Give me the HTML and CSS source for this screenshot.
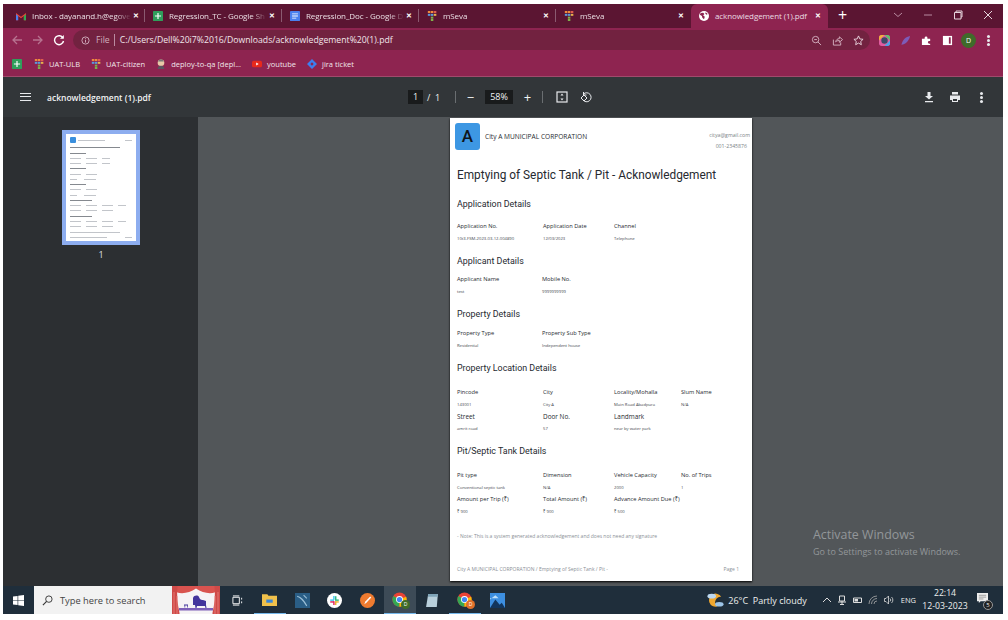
FILE: index.html
```html
<!DOCTYPE html>
<html lang="en">
<head>
    <meta charset="UTF-8">
    <title>acknowledgement (1).pdf</title>
    <link rel="stylesheet" href="styles.css">
</head>
<body>
    <svg class="defs" width="0" height="0">
        <symbol id="sheet" viewBox="0 0 12 12"><rect width="12" height="12" rx="1" fill="#2f9e5b"/><path d="M5.3 2.5h1.4v2.8h3v1.4h-3v2.8H5.3V6.7h-3V5.3h3z" fill="#fff"/></symbol>
        <symbol id="doc" viewBox="0 0 12 12"><rect width="12" height="12" rx="1" fill="#4a80ee"/><path d="M2.5 3h7v1h-7zM2.5 5.5h7v1h-7zM2.5 8h5v1h-5z" fill="#fff"/></symbol>
        <symbol id="seva" viewBox="0 0 12 12"><rect x="1" y="0" width="3" height="2.4" fill="#f08a3c"/><rect x="4.6" y="0" width="3" height="2.4" fill="#f08a3c"/><rect x="8.2" y="0" width="3" height="2.4" fill="#e05a4e"/><rect x="1" y="3.4" width="3" height="2.4" fill="#5c9ad8"/><rect x="4.6" y="3.4" width="3" height="2.4" fill="#5c9ad8"/><rect x="8.2" y="3.4" width="3" height="2.4" fill="#e8b24a"/><rect x="4.6" y="6.8" width="3" height="2.4" fill="#7fb24a"/><rect x="4.6" y="9.6" width="3" height="2.4" fill="#7fb24a"/></symbol>
        <symbol id="chrome" viewBox="0 0 20 20"><circle cx="10" cy="10" r="9.5" fill="#ea4335"/><path d="M10 10 1.8 5.3A9.5 9.5 0 0 0 10 19.5z" fill="#34a853"/><path d="M10 10v9.5A9.5 9.5 0 0 0 18.8 6.4z" fill="#fbbc05"/><circle cx="10" cy="10" r="4.6" fill="#fff"/><circle cx="10" cy="10" r="3.5" fill="#4285f4"/></symbol>
    </svg>

    <div class="window">
        <div class="tabstrip">
            <div class="tab">
                <svg class="tab-icon" viewBox="0 0 12 10"><path d="M0 1.5 6 6l6-4.500V10H9.400V5L6 7.600 2.600 5v5H0z" fill="#ea4335"/><path d="M0 3v7h2.600V5z" fill="#4a80ee"/><path d="M12 3v7H9.400V5z" fill="#34a853"/></svg>
                <span class="tab-title">Inbox - dayanand.h@egove</span><span class="tab-close">✕</span>
            </div>
            <div class="tab">
                <svg class="tab-icon"><use href="#sheet"/></svg>
                <span class="tab-title">Regression_TC - Google Sh</span><span class="tab-close">✕</span>
            </div>
            <div class="tab">
                <svg class="tab-icon"><use href="#doc"/></svg>
                <span class="tab-title">Regression_Doc - Google D</span><span class="tab-close">✕</span>
            </div>
            <div class="tab">
                <svg class="tab-icon"><use href="#seva"/></svg>
                <span class="tab-title">mSeva</span><span class="tab-close">✕</span>
            </div>
            <div class="tab tab-last">
                <svg class="tab-icon"><use href="#seva"/></svg>
                <span class="tab-title">mSeva</span><span class="tab-close">✕</span>
            </div>
            <div class="tab tab-active">
                <svg class="tab-icon" viewBox="0 0 12 12"><circle cx="6" cy="6" r="6" fill="#fff"/><path d="M2 2.500 5 2l1.500 1.500L5 5.500l2 1.500-1 3-2-2-.5-2L1 4.500zM8 1.500l2.500 2-1.500 1L7.500 3z" fill="#8e2450"/></svg>
                <span class="tab-title">acknowledgement (1).pdf</span><span class="tab-close">✕</span>
            </div>
            <div class="new-tab">+</div>
            <div class="win-controls">
                <svg viewBox="0 0 10 10"><path d="M1 3l4 3.500L9 3" fill="none" stroke="#b98ba0"/></svg>
                <svg viewBox="0 0 10 10"><path d="M1 5h8" stroke="#b98ba0"/></svg>
                <svg viewBox="0 0 10 10"><path d="M1.500 2.500h6.500v6.500H1.500zM3 2.500V1h6v6H8" fill="none" stroke="#e6d5dc"/></svg>
                <svg viewBox="0 0 10 10"><path d="M1 1l8 8M9 1l-8 8" stroke="#e6d5dc"/></svg>
            </div>
        </div>

        <div class="toolbar">
            <svg class="nav-icon" viewBox="0 0 12 12"><path d="M11 6H2M6 2 2 6l4 4" fill="none" stroke="#b7728f" stroke-width="1.300"/></svg>
            <svg class="nav-icon" viewBox="0 0 12 12"><path d="M1 6h9M6 2l4 4-4 4" fill="none" stroke="#b7728f" stroke-width="1.300"/></svg>
            <svg class="nav-icon" viewBox="0 0 12 12"><path d="M10 4A4.500 4.500 0 1 0 10.500 7" fill="none" stroke="#fff" stroke-width="1.400"/><path d="M10.800 1v3.800H7z" fill="#fff"/></svg>
            <div class="omnibox">
                <svg class="info-icon" viewBox="0 0 10 10"><circle cx="5" cy="5" r="4" fill="none" stroke="#d5b4c2"/><path d="M5 4.300v3M5 2.500v1" stroke="#d5b4c2"/></svg>
                <span class="scheme">File</span>
                <span class="url">C:/Users/Dell%20i7%2016/Downloads/acknowledgement%20(1).pdf</span>
                <div class="omni-actions">
                    <svg viewBox="0 0 12 12"><circle cx="5" cy="5" r="3.500" fill="none" stroke="#d5b4c2"/><path d="M7.500 7.500 11 11M3.500 5h3" stroke="#d5b4c2"/></svg>
                    <svg viewBox="0 0 12 12"><path d="M1.500 5v6h8V8M4 7.500C4.500 5 6 4 8 4V2l3.500 3L8 8V6C6 6 5 6.500 4 7.500z" fill="none" stroke="#d5b4c2"/></svg>
                    <svg viewBox="0 0 12 12"><path d="M6 1l1.500 3.300 3.500.4-2.600 2.400.7 3.500L6 8.800l-3.100 1.800.7-3.500L1 4.700l3.500-.4z" fill="none" stroke="#ecdbe2"/></svg>
                </div>
            </div>
            <div class="ext-icons">
                <svg viewBox="0 0 12 12"><rect width="12" height="12" rx="3" fill="#e05ba0"/><path d="M0 6V3a3 3 0 0 1 3-3h3z" fill="#f2b13c"/><path d="M12 6V3a3 3 0 0 0-3-3H6z" fill="#5fc16e"/><path d="M12 6v3a3 3 0 0 1-3 3H6z" fill="#4aa5e8"/><circle cx="6" cy="6" r="3.500" fill="#3d4a66"/></svg>
                <svg viewBox="0 0 12 12"><path d="M11 1C6 2 3 5 1.500 10.500 6 10 9.500 7 11 1z" fill="#7d5cb8"/></svg>
                <svg viewBox="0 0 12 12"><path d="M1 4h3V3a1.500 1.500 0 0 1 3 0v1h3v2.500H9a1.500 1.500 0 0 0 0 3h1V11H1z" fill="#fff"/></svg>
                <svg viewBox="0 0 12 12"><path d="M1 1h10v10H1z" fill="#fff"/><path d="M7.500 2.500h2v7h-2z" fill="#8e2450"/></svg>
                <span class="avatar">D</span>
                <span class="dots dots-light"></span>
            </div>
        </div>

        <div class="bookmarks">
            <svg class="bm-icon bm-first"><use href="#sheet"/></svg>
            <span class="bm"><svg class="bm-icon"><use href="#seva"/></svg>UAT-ULB</span>
            <span class="bm"><svg class="bm-icon"><use href="#seva"/></svg>UAT-citizen</span>
            <span class="bm"><svg class="bm-icon" viewBox="0 0 12 12"><circle cx="6" cy="4.500" r="4" fill="#e8c9a8"/><path d="M2 12c0-3 2-4 4-4s4 1 4 4z" fill="#5a5560"/><path d="M2.500 3C3 1 5 .5 6 .5S9 1 9.500 3z" fill="#777"/></svg>deploy-to-qa [depl...</span>
            <span class="bm"><svg class="bm-icon" viewBox="0 0 12 12"><rect y="2" width="12" height="8" rx="2" fill="#e8291c"/><path d="M5 4.200 8 6 5 7.800z" fill="#fff"/></svg>youtube</span>
            <span class="bm"><svg class="bm-icon" viewBox="0 0 12 12"><path d="M6 0l6 6-6 6-6-6zM6 4 4 6l2 2 2-2z" fill="#3d7ff0"/></svg>jira ticket</span>
        </div>

        <div class="pdf-toolbar">
            <div class="pdf-left">
                <span class="burger"></span>
                <span class="pdf-name">acknowledgement (1).pdf</span>
            </div>
            <div class="pdf-center">
                <span class="num-box page-box">1</span>
                <span class="page-total">/&nbsp;&nbsp;1</span>
                <span class="pdf-sep"></span>
                <span class="zoom-btn">−</span>
                <span class="num-box zoom-box">58%</span>
                <span class="zoom-btn">+</span>
                <span class="pdf-sep"></span>
                <svg class="pdf-icon fit-icon" viewBox="0 0 12 12"><rect x="1" y="1" width="10" height="10" fill="none" stroke="#e8eaed" stroke-width="1.200"/><path d="M6 2.500 7.500 4.500h-3zM6 9.500l1.500-2h-3z" fill="#e8eaed"/></svg>
                <svg class="pdf-icon" viewBox="0 0 12 12"><path d="M3.500 3A4.500 4.500 0 1 1 3 9" fill="none" stroke="#e8eaed"/><path d="M3.500 1v3H6.500" fill="none" stroke="#e8eaed"/><path d="M4 4 1 7l3 3 3-3z" fill="none" stroke="#e8eaed"/></svg>
            </div>
            <div class="pdf-right">
                <svg class="pdf-icon" viewBox="0 0 12 12"><path d="M4.500 1h3v4H10L6 8.500 2 5h2.500zM2 10h8v1.200H2z" fill="#e8eaed"/></svg>
                <svg class="pdf-icon" viewBox="0 0 12 12"><path d="M3 1h6v2.500H3zM1 4.500h10V9H9v2H3V9H1zM4 8v2h4V8z" fill="#e8eaed"/></svg>
                <span class="dots dots-pdf"></span>
            </div>
        </div>

        <div class="viewer">
            <aside class="sidebar">
                <div class="thumb">
                    <div class="thumb-page">
                        <div class="thumb-head"><span class="thumb-logo"></span><span class="line w40"></span><span class="line w12 push"></span></div>
                        <span class="line dark w80"></span>
                        <span class="line dark w22"></span>
                        <div class="thumb-row"><span class="line w18"></span><span class="line w18"></span><span class="line w12"></span></div>
                        <div class="thumb-row"><span class="line w18"></span><span class="line w18"></span><span class="line w12"></span></div>
                        <span class="line dark w22"></span>
                        <div class="thumb-row"><span class="line w18"></span><span class="line w18"></span></div>
                        <div class="thumb-row"><span class="line w12"></span><span class="line w18 shift"></span></div>
                        <span class="line dark w22"></span>
                        <div class="thumb-row"><span class="line w18"></span><span class="line w18"></span></div>
                        <div class="thumb-row"><span class="line w12"></span><span class="line w18 shift"></span></div>
                        <span class="line dark w32"></span>
                        <div class="thumb-row"><span class="line w18"></span><span class="line w18"></span><span class="line w18"></span><span class="line w12"></span></div>
                        <div class="thumb-row"><span class="line w18"></span><span class="line w18"></span><span class="line w18"></span></div>
                        <span class="line dark w32"></span>
                        <div class="thumb-row"><span class="line w18"></span><span class="line w18"></span><span class="line w18"></span><span class="line w12"></span></div>
                        <div class="thumb-row"><span class="line w18"></span><span class="line w18"></span><span class="line w18"></span></div>
                        <span class="line w80"></span>
                        <div class="thumb-foot"><span class="line w60"></span><span class="line w12"></span></div>
                    </div>
                </div>
                <div class="thumb-num">1</div>
            </aside>

            <main class="doc-area">
                <article class="page">
                    <header class="page-head">
                        <div class="logo">A</div>
                        <div class="corp">City A MUNICIPAL CORPORATION</div>
                        <div class="contact">
                            <div>citya@gmail.com</div>
                            <div class="phone">001-2345876</div>
                        </div>
                    </header>

                    <h1>Emptying of Septic Tank / Pit - Acknowledgement</h1>

                    <h2 class="first-section">Application Details</h2>
                    <div class="fields fields-app">
                        <div class="field"><b>Application No.</b><span>10t3-FSM-2023-03-12-004890</span></div>
                        <div class="field"><b>Application Date</b><span>12/03/2023</span></div>
                        <div class="field"><b>Channel</b><span>Telephone</span></div>
                    </div>

                    <h2>Applicant Details</h2>
                    <div class="fields fields-short">
                        <div class="field"><b>Applicant Name</b><span>test</span></div>
                        <div class="field"><b>Mobile No.</b><span>9999999999</span></div>
                    </div>

                    <h2>Property Details</h2>
                    <div class="fields fields-short">
                        <div class="field"><b>Property Type</b><span>Residential</span></div>
                        <div class="field"><b>Property Sub Type</b><span>Independent house</span></div>
                    </div>

                    <h2>Property Location Details</h2>
                    <div class="fields fields-wide">
                        <div class="field"><b>Pincode</b><span>143001</span></div>
                        <div class="field"><b>City</b><span>City A</span></div>
                        <div class="field"><b>Locality/Mohalla</b><span>Main Road Abadpura</span></div>
                        <div class="field"><b>Slum Name</b><span>N/A</span></div>
                        <div class="field field-big"><b>Street</b><span>amrit road</span></div>
                        <div class="field field-big"><b>Door No.</b><span>57</span></div>
                        <div class="field field-big"><b>Landmark</b><span>near by water park</span></div>
                    </div>

                    <h2>Pit/Septic Tank Details</h2>
                    <div class="fields fields-wide">
                        <div class="field"><b>Pit type</b><span>Conventional septic tank</span></div>
                        <div class="field"><b>Dimension</b><span>N/A</span></div>
                        <div class="field"><b>Vehicle Capacity</b><span>2000</span></div>
                        <div class="field"><b>No. of Trips</b><span>1</span></div>
                        <div class="field"><b>Amount per Trip (₹)</b><span>₹ 900</span></div>
                        <div class="field"><b>Total Amount (₹)</b><span>₹ 900</span></div>
                        <div class="field"><b>Advance Amount Due (₹)</b><span>₹ 500</span></div>
                    </div>

                    <p class="note-text">- Note: This is a system generated acknowledgement and does not need any signature</p>

                    <footer class="page-foot">
                        <span>City A MUNICIPAL CORPORATION / Emptying of Septic Tank / Pit -</span>
                        <span>Page 1</span>
                    </footer>
                </article>
                <div class="activate">
                    <div class="activate-title">Activate Windows</div>
                    <div>Go to Settings to activate Windows.</div>
                </div>
            </main>
        </div>

        <div class="taskbar">
            <svg class="start" viewBox="0 0 12 12"><path d="M0 1.700 5 1v4.700H0zM5.700.9 12 0v5.700H5.700zM0 6.300h5V11l-5-.7zM5.700 6.300H12V12l-6.300-.9z" fill="#fff"/></svg>
            <div class="search">
                <svg viewBox="0 0 12 12"><circle cx="7.500" cy="4.500" r="3.500" fill="none" stroke="#333"/><path d="M5 7 1 11" stroke="#333" stroke-width="1.200"/></svg>
                <span>Type here to search</span>
            </div>
            <svg class="banner" viewBox="0 0 48 28">
                <rect width="48" height="28" fill="#f6f3f5"/>
                <path d="M0 0h48v3.500C42 9 32 8 24 2.500 16 8 6 9 0 3.500z" fill="#d9534f"/>
                <path d="M0 0h5.500c-1 9 0 18 2 27v1H0zM48 0h-5.500c1 9 0 18-2 27v1H48z" fill="#cf4a48"/>
                <path d="M2 6v22M5 10v18M46 6v22M43 10v18" stroke="#e88682" stroke-width=".8"/>
                <path d="M21 19v-7c1-3 5-3 6-1 1 3 3 3 4 3l3 1v4l.5 3h-1l-.5-2h-8l-.5 2h-1l-.5-3z" fill="#43349c"/>
                <path d="M12 18.500h4v1h-4zM12.500 19.500h.7v2h-.7zM15 19.500h.7v2H15z" fill="#43349c"/>
                <rect x="7" y="22" width="34" height="2.500" fill="#7d5fb8"/>
            </svg>
            <div class="task-items">
                <span class="task-item task-view"><svg viewBox="0 0 12 12"><path d="M1 2.500h7v7H1zM1 1h7M1 11h7M10.500 3v2M10.500 7v2" fill="none" stroke="#fff"/></svg></span>
                <span class="task-item running"><svg viewBox="0 0 14 12"><path d="M0 1h5l1 1.500h8V12H0z" fill="#f0c14b"/><rect x="4" y="6" width="6" height="3" fill="#3a86d8"/></svg></span>
                <span class="task-item"><svg viewBox="0 0 14 14"><rect width="14" height="14" fill="#2a5e86"/><path d="M2 3c4 1 6 4 9 9M8 2l3 3" fill="none" stroke="#9cc0d8"/></svg></span>
                <span class="task-item"><svg viewBox="0 0 14 14"><circle cx="7" cy="7" r="7" fill="#fff"/><rect x="3" y="6" width="3.500" height="1.300" fill="#36c5f0"/><rect x="5.800" y="2.800" width="1.300" height="3.500" fill="#36c5f0"/><rect x="7.500" y="3" width="1.300" height="3.500" fill="#2eb67d"/><rect x="7.500" y="6" width="3.500" height="1.300" fill="#2eb67d"/><rect x="7.500" y="7.700" width="3.500" height="1.300" fill="#ecb22e"/><rect x="7.500" y="7.700" width="1.300" height="3.500" fill="#ecb22e"/><rect x="5.800" y="7.700" width="1.300" height="3.500" fill="#e01e5a"/><rect x="3" y="7.700" width="3.500" height="1.300" fill="#e01e5a"/></svg></span>
                <span class="task-item"><svg viewBox="0 0 14 14"><circle cx="7" cy="7" r="7" fill="#ee7b30"/><path d="M4 10.500 5 8l4.500-4.800 1 1L6 9z" fill="#fff"/></svg></span>
                <span class="task-item active running"><svg class="chrome-d"><use href="#chrome"/></svg><i class="chrome-badge green">D</i></span>
                <span class="task-item"><svg viewBox="0 0 14 14"><path d="M3 1h9l-1 12H1z" fill="#b9d0dc"/><path d="M3 1h9l-.3 2.500H2.700z" fill="#7fa4b8"/></svg></span>
                <span class="task-item running"><svg class="chrome-d"><use href="#chrome"/></svg><i class="chrome-badge orange">D</i></span>
                <span class="task-item"><svg viewBox="0 0 14 14"><rect width="14" height="14" fill="#3d8fe0"/><path d="M0 14 5 6l4 5 2-2 3 5z" fill="#12355c"/><path d="M0 6 5 2l3 3H0z" fill="#bfe0fa"/></svg></span>
            </div>
            <div class="tray">
                <svg class="weather" viewBox="0 0 18 16"><path d="M9 1a7 7 0 1 0 7 9A6 6 0 0 1 9 1z" fill="#f0a830" transform="rotate(60 9 8)"/><ellipse cx="5" cy="4" rx="4.500" ry="2.500" fill="#bcd8f0"/><ellipse cx="13" cy="12.500" rx="4.500" ry="2.500" fill="#9cc4e8"/></svg>
                <span class="weather-text">26°C&nbsp; Partly cloudy</span>
                <svg class="tray-icon chevron" viewBox="0 0 10 10"><path d="M1 7l4-4 4 4" fill="none" stroke="#ddd"/></svg>
                <svg class="tray-icon" viewBox="0 0 10 10"><path d="M2.500 1h5v5h-5zM1 7h8M3 9.500h4M5 6v3" fill="none" stroke="#ddd"/></svg>
                <svg class="tray-icon" viewBox="0 0 10 10"><path d="M.500 3h8v4.500h-8z" fill="none" stroke="#ddd"/><rect x="1.500" y="4" width="3.500" height="2.500" fill="#ddd"/></svg>
                <svg class="tray-icon" viewBox="0 0 10 10"><path d="M1 9A8 8 0 0 1 9 1M3.500 9A5.500 5.500 0 0 1 9 3.500M6 9a3 3 0 0 1 3-3" fill="none" stroke="#aaa" stroke-width=".8"/></svg>
                <svg class="tray-icon" viewBox="0 0 10 10"><path d="M.500 3.500H2L4.500 1v8L2 6.500H.500zM6 3.500a2 2 0 0 1 0 3M7.500 2a4 4 0 0 1 0 6" fill="none" stroke="#ddd" stroke-width=".8"/></svg>
                <span class="lang">ENG</span>
                <div class="clock"><div>22:14</div><div>12-03-2023</div></div>
                <span class="notify"><svg viewBox="0 0 12 12"><path d="M0 0h12v9H4L2 11V9H0z" fill="#eee"/><path d="M2 2.500h8M2 4.500h8M2 6.500h5" stroke="#777" stroke-width=".7"/></svg><i>5</i></span>
            </div>
        </div>
    </div>
</body>
</html>
```

FILE: styles.css
```css
* {
    box-sizing: border-box;
}

body {
    margin: 0;
    background-color: #ffffff;
    font-family: "Open Sans", "Noto Sans", sans-serif;
    overflow: hidden;
}

.defs {
    display: block;
    height: 0;
}

.window {
    width: 1000px;
    height: 610px;
    margin: 4px 0 0 3px;
    display: flex;
    flex-direction: column;
    overflow: hidden;
}

/* tab strip */
.tabstrip {
    height: 24px;
    flex: none;
    display: flex;
    align-items: stretch;
    padding-left: 5px;
    background-color: #5b1532;
    color: #eadde3;
}

.tab {
    width: 137px;
    display: flex;
    align-items: center;
    padding: 0 5px 1px 8px;
    font-size: 8px;
    position: relative;
}

.tab::after {
    content: "";
    position: absolute;
    right: 0;
    top: 5px;
    bottom: 6px;
    width: 1px;
    background-color: #8a5a70;
}

.tab-last {
    width: 135px;
}

.tab-last::after,
.tab-active::after {
    display: none;
}

.tab-active {
    background-color: #8e2450;
    border-radius: 6px 6px 0 0;
}

.tab-icon {
    width: 10px;
    height: 10px;
    flex: none;
    margin-right: 6px;
}

.tab-title {
    flex: 1;
    white-space: nowrap;
    letter-spacing: -0.1px;
    -webkit-mask-image: linear-gradient(to right, #000 85%, transparent);
    mask-image: linear-gradient(to right, #000 85%, transparent);
}

.tab-active .tab-title {
    -webkit-mask-image: none;
    mask-image: none;
}

.tab-close {
    width: 10px;
    flex: none;
    font-size: 7px;
    font-weight: bold;
    color: #ffffff;
    text-align: center;
}

.new-tab {
    margin-left: 10px;
    font-size: 16px;
    line-height: 22px;
    color: #ffffff;
}

.win-controls {
    margin-left: auto;
    display: flex;
    align-items: center;
    gap: 20px;
    padding: 0 10px 3px 0;
}

.win-controls svg {
    width: 10px;
    height: 10px;
}

/* address bar */
.toolbar {
    height: 24px;
    flex: none;
    display: flex;
    align-items: center;
    padding-left: 8px;
    background-color: #8e2450;
}

.nav-icon {
    width: 12px;
    height: 12px;
    margin-right: 9px;
    flex: none;
}

.omnibox {
    width: 797px;
    height: 20px;
    margin-left: -1px;
    display: flex;
    align-items: center;
    padding-left: 8px;
    border-radius: 10px;
    background-color: #722240;
    font-size: 8.700px;
}

.info-icon {
    width: 9px;
    height: 9px;
    margin-right: 6px;
}

.scheme {
    color: #cfafbd;
    padding-right: 4px;
    margin-right: 5px;
    border-right: 1px solid #b98ba0;
}

.url {
    color: #f1e6eb;
}

.omni-actions {
    margin-left: auto;
    display: flex;
    gap: 10px;
    padding-right: 6px;
}

.omni-actions svg {
    width: 11px;
    height: 11px;
}

.ext-icons {
    display: flex;
    align-items: center;
    gap: 10px;
    margin-left: 9px;
}

.ext-icons svg {
    width: 11px;
    height: 11px;
}

.avatar {
    width: 15px;
    height: 15px;
    margin-left: -2px;
    border-radius: 50%;
    background-color: #3f6b2a;
    color: #ffffff;
    font-size: 7px;
    line-height: 15px;
    text-align: center;
}

.dots {
    width: 3px;
    height: 3px;
    border-radius: 50%;
    background-color: #e8eaed;
    box-shadow: 0 -4px 0 #e8eaed, 0 4px 0 #e8eaed;
}

.dots-light {
    margin-left: 1px;
}

.dots-pdf {
    margin-left: 5px;
}

/* bookmarks */
.bookmarks {
    height: 25px;
    flex: none;
    display: flex;
    align-items: center;
    padding: 0 0 0 9px;
    background-color: #8e2450;
    border-bottom: 1px solid #a04a6c;
    color: #f1e6eb;
    font-size: 7.500px;
}

.bm {
    display: flex;
    align-items: center;
    margin-right: 11px;
    white-space: nowrap;
}

.bm-icon {
    width: 10px;
    height: 10px;
    flex: none;
    margin-right: 5px;
}

.bm-first {
    margin-right: 12px;
}

/* pdf viewer toolbar */
.pdf-toolbar {
    height: 40px;
    flex: none;
    display: grid;
    grid-template-columns: 396px 1fr auto;
    align-items: center;
    background-color: #323639;
    color: #f1f3f4;
    font-size: 9px;
}

.pdf-left {
    display: flex;
    align-items: center;
    padding-left: 17px;
}

.burger {
    width: 11px;
    height: 8px;
    border-top: 1.500px solid #e8eaed;
    border-bottom: 1.500px solid #e8eaed;
    position: relative;
    margin-right: 16px;
}

.burger::after {
    content: "";
    position: absolute;
    left: 0;
    right: 0;
    top: 1.500px;
    height: 1.500px;
    background-color: #e8eaed;
}

.pdf-name {
    font-size: 8.500px;
    font-weight: 600;
}

.pdf-center {
    display: flex;
    align-items: center;
    margin-left: 9px;
}

.num-box {
    height: 14px;
    line-height: 14px;
    background-color: #191b1c;
    text-align: center;
}

.page-box {
    width: 15px;
}

.zoom-box {
    width: 28px;
}

.page-total {
    margin-left: 4px;
    width: 28px;
}

.pdf-sep {
    width: 1px;
    height: 12px;
    background-color: #6a6e71;
}

.zoom-btn {
    width: 29px;
    text-align: center;
    font-size: 13px;
    line-height: 14px;
}

.pdf-icon {
    width: 12px;
    height: 12px;
    flex: none;
}

.fit-icon {
    margin-left: 13px;
    margin-right: 12px;
}

.pdf-right {
    display: flex;
    align-items: center;
    gap: 14px;
    padding-right: 20px;
}

/* viewer body */
.viewer {
    flex: 1;
    min-height: 0;
    display: flex;
}

.sidebar {
    width: 195px;
    flex: none;
    background-color: #2c2f32;
    padding: 13px 0 0 59px;
}

.thumb {
    width: 78px;
    height: 115px;
    padding: 4px;
    background-color: #8dadef;
}

.thumb-page {
    height: 100%;
    background-color: #ffffff;
    padding: 3px 4px;
    display: flex;
    flex-direction: column;
    justify-content: space-between;
}

.thumb-head {
    display: flex;
    align-items: center;
    gap: 2px;
}

.thumb-logo {
    width: 6px;
    height: 6px;
    background-color: #3a8fdd;
    border-radius: 1px;
}

.line {
    display: block;
    height: 1px;
    background-color: #c2c5ca;
}

.dark {
    background-color: #85898f;
}

.push {
    margin-left: auto;
}

.shift {
    margin-left: 2px;
}

.thumb-row {
    display: flex;
    gap: 5px;
}

.thumb-foot {
    display: flex;
    justify-content: space-between;
}

.w12 { width: 12%; }
.w18 { width: 18%; }
.w22 { width: 26%; }
.w32 { width: 36%; }
.w40 { width: 44%; }
.w60 { width: 60%; }
.w80 { width: 80%; }

.thumb-num {
    width: 78px;
    margin-top: 3px;
    text-align: center;
    color: #dfe1e3;
    font-size: 9px;
}

.doc-area {
    flex: 1;
    position: relative;
    background-color: #525659;
    padding: 1px 0 0 252px;
}

/* the pdf page */
.page {
    width: 302px;
    height: 463px;
    background-color: #ffffff;
    box-shadow: 0 1px 2px #000000;
    padding: 5px 2px 0 7px;
    color: #262a30;
}

.page-head {
    display: flex;
    align-items: center;
    height: 27px;
}

.logo {
    width: 25px;
    height: 27px;
    margin-left: -2px;
    border-radius: 3px;
    background-color: #3d97e3;
    color: #10151a;
    font-family: Roboto, sans-serif;
    font-size: 17px;
    font-weight: 500;
    line-height: 27px;
    text-align: center;
}

.corp {
    margin-left: 5px;
    font-size: 6.600px;
}

.contact {
    align-self: flex-start;
    margin: 7px 0 0 auto;
    color: #7a7f86;
    font-size: 5.200px;
    line-height: 11px;
    text-align: right;
}

.phone {
    padding-right: 3px;
}

h1 {
    margin: 16px 0 0;
    font-family: Roboto, sans-serif;
    font-size: 11.850px;
    font-weight: 400;
    line-height: 18px;
    white-space: nowrap;
}

h2 {
    margin: 9px 0 0;
    font-family: Roboto, sans-serif;
    font-size: 8.900px;
    font-weight: 400;
    line-height: 14px;
}

h2.first-section {
    margin-top: 13px;
}

.fields {
    display: grid;
    margin-top: 12px;
}

.fields-app {
    grid-template-columns: 86px 71px 1fr;
    margin-top: 9.500px;
}

.fields-short {
    grid-template-columns: 85px 1fr;
    margin-top: 6.500px;
}

.fields-wide {
    grid-template-columns: 86px 71px 67px 1fr;
}

.field {
    display: flex;
    flex-direction: column;
    white-space: nowrap;
    height: 24px;
}

.field b {
    font-size: 5.700px;
    font-weight: 400;
    line-height: 11px;
}

.field-big b {
    font-size: 6.400px;
}

.field span {
    font-size: 4.200px;
    line-height: 14px;
    color: #44484e;
}

.note-text {
    margin: 15.500px 0 0;
    font-size: 5px;
    color: #8a8f96;
}

.page-foot {
    display: flex;
    justify-content: space-between;
    margin-top: 27px;
    padding-right: 11px;
    font-size: 5px;
    color: #8a8f96;
}

.activate {
    position: absolute;
    left: 615px;
    bottom: 28px;
    color: #93979a;
    font-size: 9px;
}

.activate-title {
    font-size: 12.400px;
    line-height: 20px;
}

/* windows taskbar */
.taskbar {
    height: 28px;
    flex: none;
    display: flex;
    align-items: center;
    background-color: #1f2e3b;
}

.start {
    width: 11px;
    height: 11px;
    margin: 0 10px 0 10px;
    flex: none;
}

.search {
    width: 138px;
    height: 28px;
    display: flex;
    align-items: center;
    padding-left: 8px;
    background-color: #f2f2f2;
    color: #444444;
    font-size: 9.300px;
}

.search svg {
    width: 11px;
    height: 11px;
    margin-right: 7px;
}

.banner {
    width: 48px;
    height: 28px;
    flex: none;
}

.task-items {
    display: flex;
    margin-left: 1px;
}

.task-item {
    width: 32.500px;
    height: 28px;
    display: flex;
    align-items: center;
    justify-content: center;
    position: relative;
}

.task-item svg {
    width: 15px;
    height: 15px;
}

.task-view svg {
    width: 11px;
    height: 11px;
}

.running {
    border-bottom: 1px solid #76b9ed;
}

.active {
    background-color: #3d4b57;
}

.chrome-badge {
    position: absolute;
    right: 6px;
    bottom: 4px;
    width: 9px;
    height: 9px;
    border-radius: 50%;
    color: #ffffff;
    font-size: 5px;
    font-style: normal;
    line-height: 9px;
    text-align: center;
}

.green {
    background-color: #3f6b2a;
}

.orange {
    background-color: #e0702a;
}

.tray {
    margin-left: auto;
    display: flex;
    align-items: center;
    color: #eeeeee;
    font-size: 9px;
}

.weather {
    width: 17px;
    height: 16px;
    margin-right: 4px;
}

.weather-text {
    margin-right: 15px;
    font-size: 9px;
}

.tray-icon {
    width: 10px;
    height: 10px;
    margin-right: 5.500px;
}

.lang {
    margin-left: 1.500px;
    font-size: 7.500px;
}

.clock {
    width: 48px;
    margin-left: 5px;
    text-align: center;
    font-size: 8.700px;
    line-height: 13.500px;
}

.notify {
    position: relative;
    width: 14px;
    height: 14px;
    margin: 0 12px 0 8px;
}

.notify svg {
    width: 11px;
    height: 11px;
}

.notify i {
    position: absolute;
    right: -2px;
    bottom: -3px;
    width: 10px;
    height: 10px;
    border: 1px solid #999;
    border-radius: 50%;
    background-color: #222;
    font-size: 6px;
    font-style: normal;
    line-height: 8px;
    text-align: center;
}
```
